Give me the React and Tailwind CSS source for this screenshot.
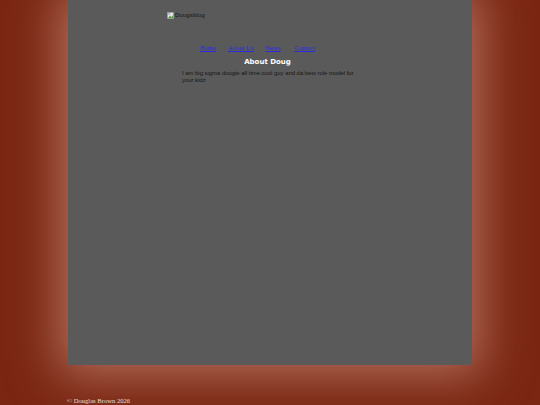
export default function App() {
  const links = ['Home', 'About Us', 'News', 'Contact'];

  return (
    <div className="min-h-[405px] w-[540px] bg-[#7a2612] overflow-hidden">
      <div className="w-[404px] h-[365px] mx-auto bg-[#5a5a5a] shadow-[0_0_45px_10px_rgba(185,120,100,0.9)] relative">
        <div className="pl-[99px] pt-[11px] flex items-center gap-[1px] text-[6.2px] leading-[8px] text-[#161616] font-['Liberation_Sans',sans-serif]">
          <svg width="7" height="7" viewBox="0 0 7 7">
            <rect x="0.5" y="0.5" width="6" height="6" fill="#e8e8e8" stroke="#9a9a9a" strokeWidth="0.6" />
            <path d="M1 6 L3 3.5 L4.5 5 L6 3 L6 6 Z" fill="#5aa04a" />
            <rect x="1.2" y="1.2" width="2" height="1.4" fill="#7aaee0" />
          </svg>
          <span>Dougsblog</span>
        </div>

        <nav className="pl-[132px] pt-[25px] flex gap-[12px] font-['Liberation_Serif',serif] text-[6.6px] leading-[8px]">
          {links.map((l, i) => (
            <a key={l} href="#" className={`text-[#2a2ae0] underline ${i === 3 ? 'ml-[2px]' : ''}`}>
              {l}
            </a>
          ))}
        </nav>

        <div className="ml-[114px] w-[178px] mt-[6px] font-['Liberation_Sans',sans-serif]">
          <h2 className="pr-[7px] text-center text-white font-bold text-[7px] leading-[9px] font-['DejaVu_Sans',sans-serif]">About Doug</h2>
          <p className="mt-[3px] text-[5.9px] leading-[7px] text-[#161616] font-['Liberation_Sans',sans-serif]">
            I am big sigma dougie all time cool guy and da best role model for your kidz
          </p>
        </div>
      </div>

      <div className="ml-[67px] mt-[32px] font-['Liberation_Serif',serif] text-[6.6px] leading-[8px] text-[#f0e4dc]">
        © Douglas Brown 2026
      </div>
    </div>
  );
}
